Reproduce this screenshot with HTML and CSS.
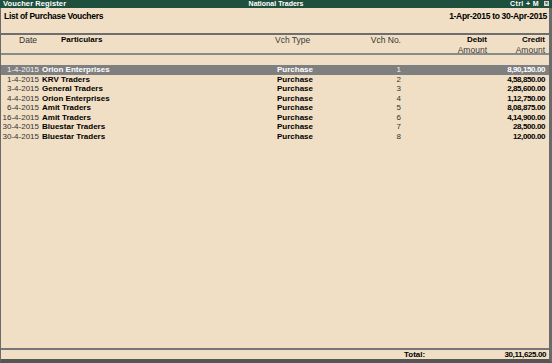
FILE: index.html
```html
<!DOCTYPE html>
<html lang="en">
<head>
    <meta charset="UTF-8">
    <title>Voucher Register</title>
    <link rel="stylesheet" href="styles.css">
</head>
<body>
    <div class="window">
        <div class="titlebar">
            <span class="t-left">Voucher Register</span>
            <span class="t-center">National Traders</span>
            <span class="t-right"><span class="hotkey">Ctrl + M</span> <span class="closebox">&#215;</span></span>
        </div>
        <div class="report">
            <div class="report-head">
                <span class="b">List of Purchase Vouchers</span>
                <span class="b">1-Apr-2015 to 30-Apr-2015</span>
            </div>
            <div class="colhead">
                <div class="row">
                    <span class="c-date head-date">Date</span>
                    <span class="c-part b head-part">Particulars</span>
                    <span class="c-type">Vch Type</span>
                    <span class="c-no">Vch No.</span>
                    <span class="c-dr b">Debit</span>
                    <span class="c-cr b">Credit</span>
                </div>
                <div class="row">
                    <span class="c-date"></span>
                    <span class="c-part"></span>
                    <span class="c-type"></span>
                    <span class="c-no"></span>
                    <span class="c-dr">Amount</span>
                    <span class="c-cr">Amount</span>
                </div>
            </div>
            <div class="rows">
                <div class="row sel">
                    <span class="c-date">1-4-2015</span><span class="c-part b">Orion Enterprises</span><span class="c-type b">Purchase</span><span class="c-no">1</span><span class="c-dr"></span><span class="c-cr b amt">8,90,150.00</span>
                </div>
                <div class="row">
                    <span class="c-date">1-4-2015</span><span class="c-part b">KRV Traders</span><span class="c-type b">Purchase</span><span class="c-no">2</span><span class="c-dr"></span><span class="c-cr b amt">4,58,850.00</span>
                </div>
                <div class="row">
                    <span class="c-date">3-4-2015</span><span class="c-part b">General Traders</span><span class="c-type b">Purchase</span><span class="c-no">3</span><span class="c-dr"></span><span class="c-cr b amt">2,85,600.00</span>
                </div>
                <div class="row">
                    <span class="c-date">4-4-2015</span><span class="c-part b">Orion Enterprises</span><span class="c-type b">Purchase</span><span class="c-no">4</span><span class="c-dr"></span><span class="c-cr b amt">1,12,750.00</span>
                </div>
                <div class="row">
                    <span class="c-date">6-4-2015</span><span class="c-part b">Amit Traders</span><span class="c-type b">Purchase</span><span class="c-no">5</span><span class="c-dr"></span><span class="c-cr b amt">8,08,875.00</span>
                </div>
                <div class="row">
                    <span class="c-date">16-4-2015</span><span class="c-part b">Amit Traders</span><span class="c-type b">Purchase</span><span class="c-no">6</span><span class="c-dr"></span><span class="c-cr b amt">4,14,900.00</span>
                </div>
                <div class="row">
                    <span class="c-date">30-4-2015</span><span class="c-part b">Bluestar Traders</span><span class="c-type b">Purchase</span><span class="c-no">7</span><span class="c-dr"></span><span class="c-cr b amt">28,500.00</span>
                </div>
                <div class="row">
                    <span class="c-date">30-4-2015</span><span class="c-part b">Bluestar Traders</span><span class="c-type b">Purchase</span><span class="c-no">8</span><span class="c-dr"></span><span class="c-cr b amt">12,000.00</span>
                </div>
            </div>
            <div class="total">
                <span class="b total-label">Total:</span>
                <span class="b amt">30,11,625.00</span>
            </div>
        </div>
    </div>
</body>
</html>
```

FILE: styles.css
```css
html, body { margin: 0; padding: 0; height: 100%; }
body { background: #f0dfc5; font-family: "Liberation Sans", Arial, sans-serif; font-size: 8px; color: #000; }
.b { font-weight: bold; }
.amt { letter-spacing: -0.4px; }

.window { height: 363px; display: flex; flex-direction: column; box-sizing: border-box; border-left: 1px solid #6a6a6a; border-right: 3px solid #6a6a6a; border-bottom: 4px solid #555; }

.titlebar { height: 8px; background: #1f4f3d; color: #fff; font-weight: bold; font-size: 7px; line-height: 8px; display: flex; justify-content: space-between; padding: 0 3px 0 2px; margin-right: -3px; margin-left: -1px; }
.t-left, .t-right { flex: 1; }
.t-left { font-size: 7.5px; letter-spacing: 0.1px; padding-left: 1px; }
.t-right { text-align: right; }
.hotkey { letter-spacing: 0.4px; }
.closebox { display: inline-block; width: 5px; height: 5px; line-height: 5px; font-size: 5px; text-align: center; background: #d8d8d8; color: #333; margin-left: 3px; vertical-align: 1px; }

.report { flex: 1; display: flex; flex-direction: column; }
.report-head { height: 25px; display: flex; justify-content: space-between; padding: 3px 2px 0 3px; box-sizing: border-box; font-size: 8.5px; line-height: 11px; letter-spacing: -0.3px; }

.colhead { border-top: 2px solid #6e6e6e; border-bottom: 2px solid #8a8a8a; color: #3a3a3a; font-size: 8.5px; }
.row { display: grid; grid-template-columns: 38px 235px 63px 64px 86px 58px; height: 9.5px; line-height: 9.5px; white-space: nowrap; }
.colhead .row { height: 10px; line-height: 10px; }
.colhead .row + .row { height: 8px; }
.colhead .b { color: #000; font-size: 8px; }
.c-date { text-align: right; color: #333; }
.head-date { padding-right: 2px; }
.c-part { padding-left: 3px; }
.head-part { padding-left: 22px; }
.c-type { padding-left: 1px; }
.c-no, .c-dr, .c-cr { text-align: right; }
.c-no { color: #333; }

.rows { flex: 1; padding-top: 10px; }
.rows .c-type { padding-left: 3px; }
.sel { background: #7f7f7f; color: #fff; }
.sel .c-date, .sel .c-no { color: #f4f4f4; }

.total { height: 9px; line-height: 9px; border-top: 2px solid #777; display: flex; justify-content: space-between; padding: 0 3px 0 403px; }
```
